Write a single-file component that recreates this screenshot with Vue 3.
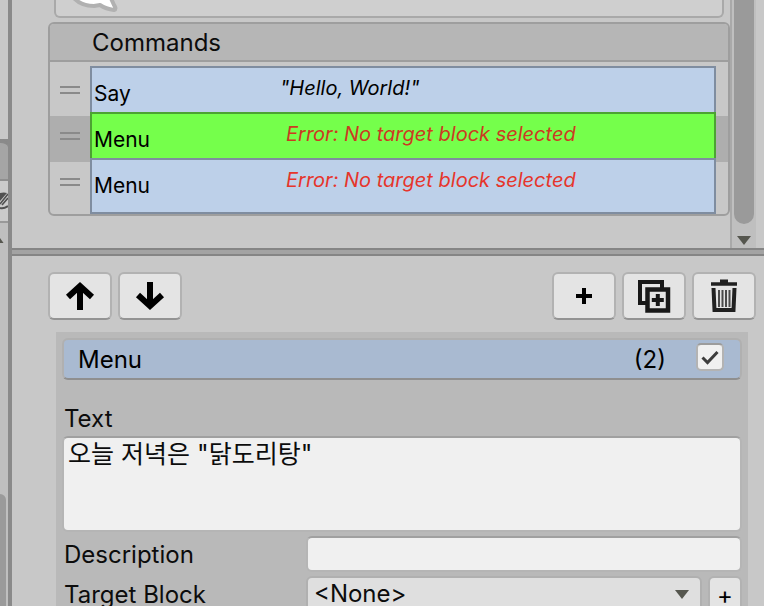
<script setup>
import { ref } from 'vue'

const commands = [
  { name: 'Say', summary: '"Hello, World!"' },
  { name: 'Menu', summary: 'Error: No target block selected', error: true, selected: true },
  { name: 'Menu', summary: 'Error: No target block selected', error: true },
]

const enabled = ref(true)
const text = ref('오늘 저녁은 "닭도리탕"')
const description = ref('')
const target = ref('<None>')
</script>

<template>
  <div class="editor">
    <aside class="side">
      <div class="side-top"></div>
      <div class="side-tab"></div>
      <div class="side-row">
        <svg class="eye" width="8" height="40" viewBox="0 0 8 40" aria-hidden="true">
          <path d="M0 12Q4 11 7 12L0 20Z" fill="#505050" />
          <path d="M0 23L8 13M2 24L8 17" stroke="#505050" stroke-width="1.6" fill="none" />
          <path d="M0 27Q4 28 8 25" stroke="#505050" stroke-width="2" fill="none" />
        </svg>
      </div>
      <div class="side-rest">
        <svg width="4" height="6" viewBox="0 0 4 6" aria-hidden="true"><path d="M0 0L3.5 5H0Z" fill="#55564e" /></svg>
        <div class="side-thumb"></div>
      </div>
    </aside>

    <main class="main">
      <section class="upper">
        <div class="upper-content">
          <div class="preview">
            <svg width="60" height="16" viewBox="0 0 60 16" aria-hidden="true">
              <path d="M0 -4Q8 6 22 6L28 5Q34 9 42 10Q45 9 42 5L38 -4Z" fill="#fff" stroke="#b1b1b1" stroke-width="4" stroke-linejoin="round" />
            </svg>
          </div>
          <div class="commands">
            <h2 class="commands-title">Commands</h2>
            <ul class="list">
              <li v-for="(c, i) in commands" :key="i" class="row" :class="{ selected: c.selected }">
                <span class="handle"></span>
                <div class="command">
                  <span class="name">{{ c.name }}</span>
                  <span class="summary" :class="{ error: c.error }">{{ c.summary }}</span>
                </div>
              </li>
            </ul>
          </div>
        </div>
        <div class="scroll">
          <div class="thumb"></div>
          <svg width="14" height="9" viewBox="0 0 14 9" aria-hidden="true"><path d="M0 0H14L7 9Z" fill="#55564e" /></svg>
        </div>
      </section>

      <div class="splitter"></div>

      <section class="lower">
        <div class="toolbar">
          <button class="btn" aria-label="Move up">
            <svg width="32" height="32" viewBox="0 0 32 32"><path d="M16 30V6M4 17L16 6L28 17" class="arrow" /></svg>
          </button>
          <button class="btn" aria-label="Move down">
            <svg width="32" height="32" viewBox="0 0 32 32"><path d="M16 2V26M4 15L16 26L28 15" class="arrow" /></svg>
          </button>
          <span class="spacer"></span>
          <button class="btn" aria-label="Add">
            <svg width="32" height="32" viewBox="0 0 32 32"><path d="M16 8V24M8 16H24" stroke="#000" stroke-width="4" /></svg>
          </button>
          <button class="btn" aria-label="Duplicate">
            <svg width="34" height="34" viewBox="0 0 34 34" fill="none" stroke="#181818">
              <path d="M10 24H3V3H25V9" stroke-width="4" />
              <path d="M10.500 10.500H31V31.500H10.500Z" stroke-width="4.500" />
              <path d="M20.800 15V27M14.800 21H26.800" stroke-width="4" />
            </svg>
          </button>
          <button class="btn" aria-label="Delete">
            <svg width="32" height="34" viewBox="0 0 32 34" fill="none" stroke="#202020">
              <path d="M3 5H29" stroke-width="3.500" />
              <path d="M12 2.500H20" stroke-width="4" />
              <path d="M5.500 9L6.500 31H25.500L26.500 9" stroke-width="4" />
              <path d="M11 11V28M14.500 11V28M18 11V28M21.500 11V28" stroke-width="2" stroke="#4a4a4a" />
            </svg>
          </button>
        </div>

        <div class="panel">
          <div class="title">
            <span class="title-name">Menu</span>
            <span class="title-id">(2)</span>
            <label class="check">
              <input v-model="enabled" type="checkbox" aria-label="Enabled" />
              <svg v-if="enabled" width="24" height="24" viewBox="0 0 24 24" aria-hidden="true"><path d="M4.500 12.500L9.500 17.500L19.500 7" /></svg>
            </label>
          </div>

          <label class="label text-label" for="text">Text</label>
          <textarea id="text" v-model="text" class="field area" spellcheck="false"></textarea>

          <div class="form-row">
            <label class="label" for="description">Description</label>
            <input id="description" v-model="description" class="field" type="text" />
          </div>
          <div class="form-row">
            <label class="label" for="target">Target Block</label>
            <div class="target">
              <div class="select-wrap">
                <select id="target" v-model="target">
                  <option>&lt;None&gt;</option>
                </select>
                <svg class="caret" width="14" height="9" viewBox="0 0 14 9" aria-hidden="true"><path d="M0 0H14L7 9Z" fill="#55564e" /></svg>
              </div>
              <button class="plus">+</button>
            </div>
          </div>
        </div>
      </section>
    </main>
  </div>
</template>

<style>
body {
  margin: 0;
  overflow: hidden;
}
</style>

<style scoped>
* {
  box-sizing: border-box;
}
.editor {
  display: flex;
  height: 100vh;
  overflow: hidden;
  background: #c8c8c8;
  color: #0c0c0c;
  font-family: Inter, "Noto Sans CJK KR", sans-serif;
  font-size: 24px;
  line-height: 32px;
}
.editor svg {
  display: block;
  flex: none;
}
.side {
  display: flex;
  flex-direction: column;
  flex: none;
  width: 12px;
  border-right: 4px solid #8a8a8a;
  background: #8a8a8a;
}
.side-top {
  flex: 0 0 139px;
  background: #c8c8c8;
}
.side-tab {
  flex: 0 0 42px;
  border-top: 4px solid #8a8a8a;
  border-bottom: 2px solid #8f8f8f;
  border-radius: 0 8px 0 0;
  background: #a5a5a5;
}
.side-row {
  flex: 0 0 42px;
  border-bottom: 2px solid #999;
  background: #cbcbcb;
}
.side-rest {
  display: flex;
  flex-direction: column;
  flex: 1;
  padding-top: 15px;
  background: #bfbfbf;
}
.side-thumb {
  flex: 1;
  width: 6px;
  margin-top: 250px;
  border-radius: 0 8px 0 0;
  background: #9a9a9a;
}
.main {
  display: flex;
  flex-direction: column;
  flex: 1;
  min-width: 0;
}
.upper {
  display: flex;
  padding-right: 8px;
}
.upper-content {
  flex: 1;
  min-width: 0;
  padding: 0 0 32px 36px;
}
.preview {
  height: 18px;
  margin: 0 6px;
  padding-left: 16px;
  border: 2px solid #a9a9a9;
  border-top: 0;
  border-radius: 0 0 6px 6px;
  background: #cfcfcf;
}
.commands {
  margin-top: 4px;
  border: 2px solid #9e9e9e;
  border-radius: 6px;
  overflow: hidden;
}
.commands-title {
  margin: 0;
  padding: 3px 42px 1px;
  border-bottom: 2px solid #9e9e9e;
  background: #b6b6b6;
  font-size: 24px;
  font-weight: 400;
}
.list {
  margin: 0;
  padding: 8px 0 6px;
  list-style: none;
}
.row {
  display: flex;
  height: 46px;
  padding-right: 12px;
}
.row.selected {
  background: #aeaeae;
}
.handle {
  width: 20px;
  height: 8px;
  margin: 16px 10px 0;
  border: solid #8a8a8a;
  border-width: 2px 0;
}
.command {
  display: flex;
  flex: 1;
  height: 48px;
  margin-top: -4px;
  padding-left: 2px;
  border: 2px solid #7f8da0;
  background: #bdd0e9;
  color: #000;
}
.row:last-child .command {
  height: 56px;
}
.selected .command {
  border-color: #4ca332;
  background: #75ff4b;
}
.name {
  width: 186px;
  padding-top: 10px;
  font-size: 21px;
}
.summary {
  padding-top: 4px;
  font-size: 20px;
  font-style: italic;
  white-space: nowrap;
}
.error {
  padding-left: 6px;
  color: #e6352b;
}
.selected .error {
  color: #cc3a22;
}
.scroll {
  display: flex;
  flex-direction: column;
  align-items: center;
  width: 26px;
  padding-bottom: 3px;
  border-left: 2px solid #a9a9a9;
  background: #bfbfbf;
}
.thumb {
  flex: 1;
  width: 20px;
  margin-bottom: 12px;
  border-radius: 0 0 10px 10px;
  background: #9a9a9a;
}
.summary {
  padding-top: 8px;
  line-height: 24px;
}
.splitter {
  flex: none;
  height: 8px;
  border: solid #858585;
  border-width: 2px 0;
  background: #a3a3a3;
}
.toolbar {
  display: flex;
  gap: 6px;
  padding: 16px 8px 12px 36px;
}
.spacer {
  flex: 1;
}
.btn,
.plus {
  display: flex;
  align-items: center;
  justify-content: center;
  width: 64px;
  height: 48px;
  padding: 0;
  border: 2px solid #b2b2b2;
  border-bottom-color: #939393;
  border-radius: 6px;
  background: #e4e4e4;
  color: #000;
  font: inherit;
}
.arrow {
  fill: none;
  stroke: #000;
  stroke-width: 6;
}
.panel {
  margin: 0 16px 0 44px;
  padding: 6px;
  background: #b9b9b9;
}
.title {
  display: flex;
  align-items: center;
  height: 42px;
  padding: 0 16px 0 14px;
  border: 2px solid #b0b0b0;
  border-bottom-color: #8f8f8f;
  border-radius: 6px;
  background: #a9bad1;
  color: #000;
}
.title-name,
.title-id {
  padding-top: 2px;
}
.title-name {
  flex: 1;
}
.title-id {
  margin-right: 30px;
}
.check {
  display: grid;
  margin-bottom: 4px;
}
.check > * {
  grid-area: 1 / 1;
}
.check input {
  appearance: none;
  width: 28px;
  height: 28px;
  margin: 0;
  border: 2px solid #b3b3b3;
  border-top-color: #9c9c9c;
  border-radius: 5px;
  background: #f0f0f0;
}
.check svg {
  place-self: center;
  fill: none;
  stroke: #3c3c3c;
  stroke-width: 3;
  pointer-events: none;
}
.label {
  display: block;
  padding-left: 2px;
}
.text-label {
  margin-top: 23px;
}
.field {
  display: block;
  width: 100%;
  height: 36px;
  padding: 0 4px;
  border: 2px solid #b5b5b5;
  border-top-color: #a0a0a0;
  border-radius: 6px;
  background: #f0f0f0;
  color: #0c0c0c;
  font: inherit;
}
.area {
  height: 96px;
  margin-top: 1px;
  font-size: 25px;
  resize: none;
}
.form-row {
  display: grid;
  grid-template-columns: 244px 1fr;
  margin-top: 4px;
}
.form-row .label {
  padding-top: 3px;
}
.target {
  display: flex;
  gap: 6px;
}
.select-wrap {
  display: grid;
  flex: 1;
}
.select-wrap > * {
  grid-area: 1 / 1;
}
select {
  appearance: none;
  width: 100%;
  height: 40px;
  padding: 0 8px 4px 6px;
  border: 2px solid #b0b0b0;
  border-radius: 6px;
  background: #dfdfdf;
  color: #0c0c0c;
  font: inherit;
}
.caret {
  margin: 14px 13px 0 0;
  justify-self: end;
  pointer-events: none;
}
.plus {
  width: 34px;
  height: 40px;
}
</style>
